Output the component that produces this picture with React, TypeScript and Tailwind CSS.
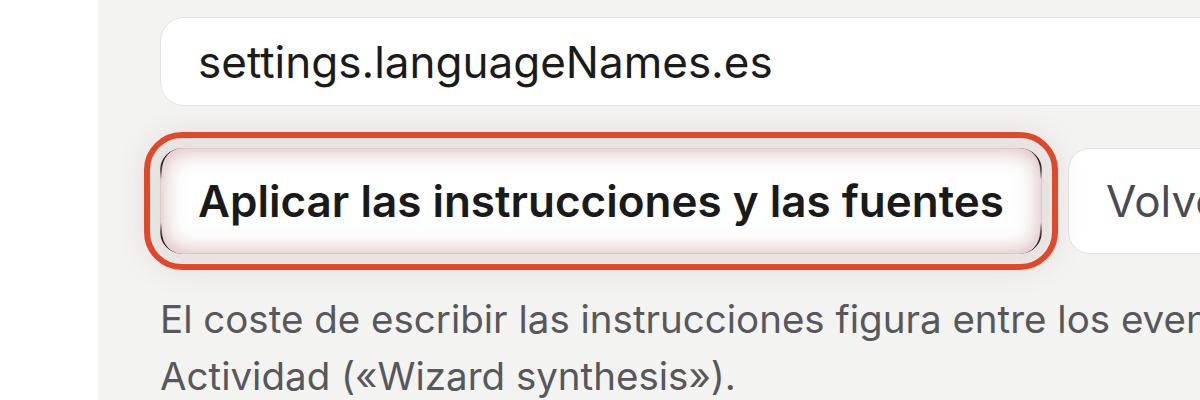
export default function App() {
  return (
    <div className="flex h-[400px] w-[1200px] overflow-hidden bg-white font-['Inter','Noto_Sans',sans-serif]">
      {/* left gutter */}
      <div className="w-[98px] shrink-0 bg-white" />

      <div className="flex-1 bg-[#f3f3f1] pl-[62px] pt-[17px]">
        <div className="w-[1480px]">
          {/* language name field */}
          <div className="flex h-[89px] items-center rounded-[24px] border border-[#e3e3e0] bg-white px-[37px] text-[44px] text-[#1b1b1b]">
            settings.languageNames.es
          </div>

          {/* actions */}
          <div className="mt-[42px] flex gap-[26px]">
            <button className="relative flex h-[106px] shrink-0 items-center whitespace-nowrap rounded-[22px] border border-[#dcc9c9] bg-white px-[37px] text-[44px] font-semibold text-[#1a1a1a] outline-[6px] outline-[#e0472b] outline-offset-[10px] shadow-[inset_0_0_24px_rgba(170,110,110,0.55),0_0_30px_16px_rgba(90,60,50,0.10)]">
              <span className="pointer-events-none absolute inset-[-1px] rounded-[22px] border-x-2 border-[#2a1f1f] [mask-image:linear-gradient(to_bottom,black_0%,black_16%,transparent_30%,transparent_70%,black_84%,black_100%)]" />
              Aplicar las instrucciones y las fuentes
            </button>
            <button className="flex h-[106px] shrink-0 items-center whitespace-nowrap rounded-[22px] border border-[#e3e3e0] bg-white px-[37px] text-[44px] text-[#4a4a55]">
              Volver a los valores predeterminados
            </button>
          </div>

          <p className="mt-[37px] w-[1430px] text-[38.5px] leading-[57px] text-[#57575c]">
            El coste de escribir las instrucciones figura entre los eventos de la pestaña
            Actividad («Wizard synthesis»).
          </p>
        </div>
      </div>
    </div>
  );
}
